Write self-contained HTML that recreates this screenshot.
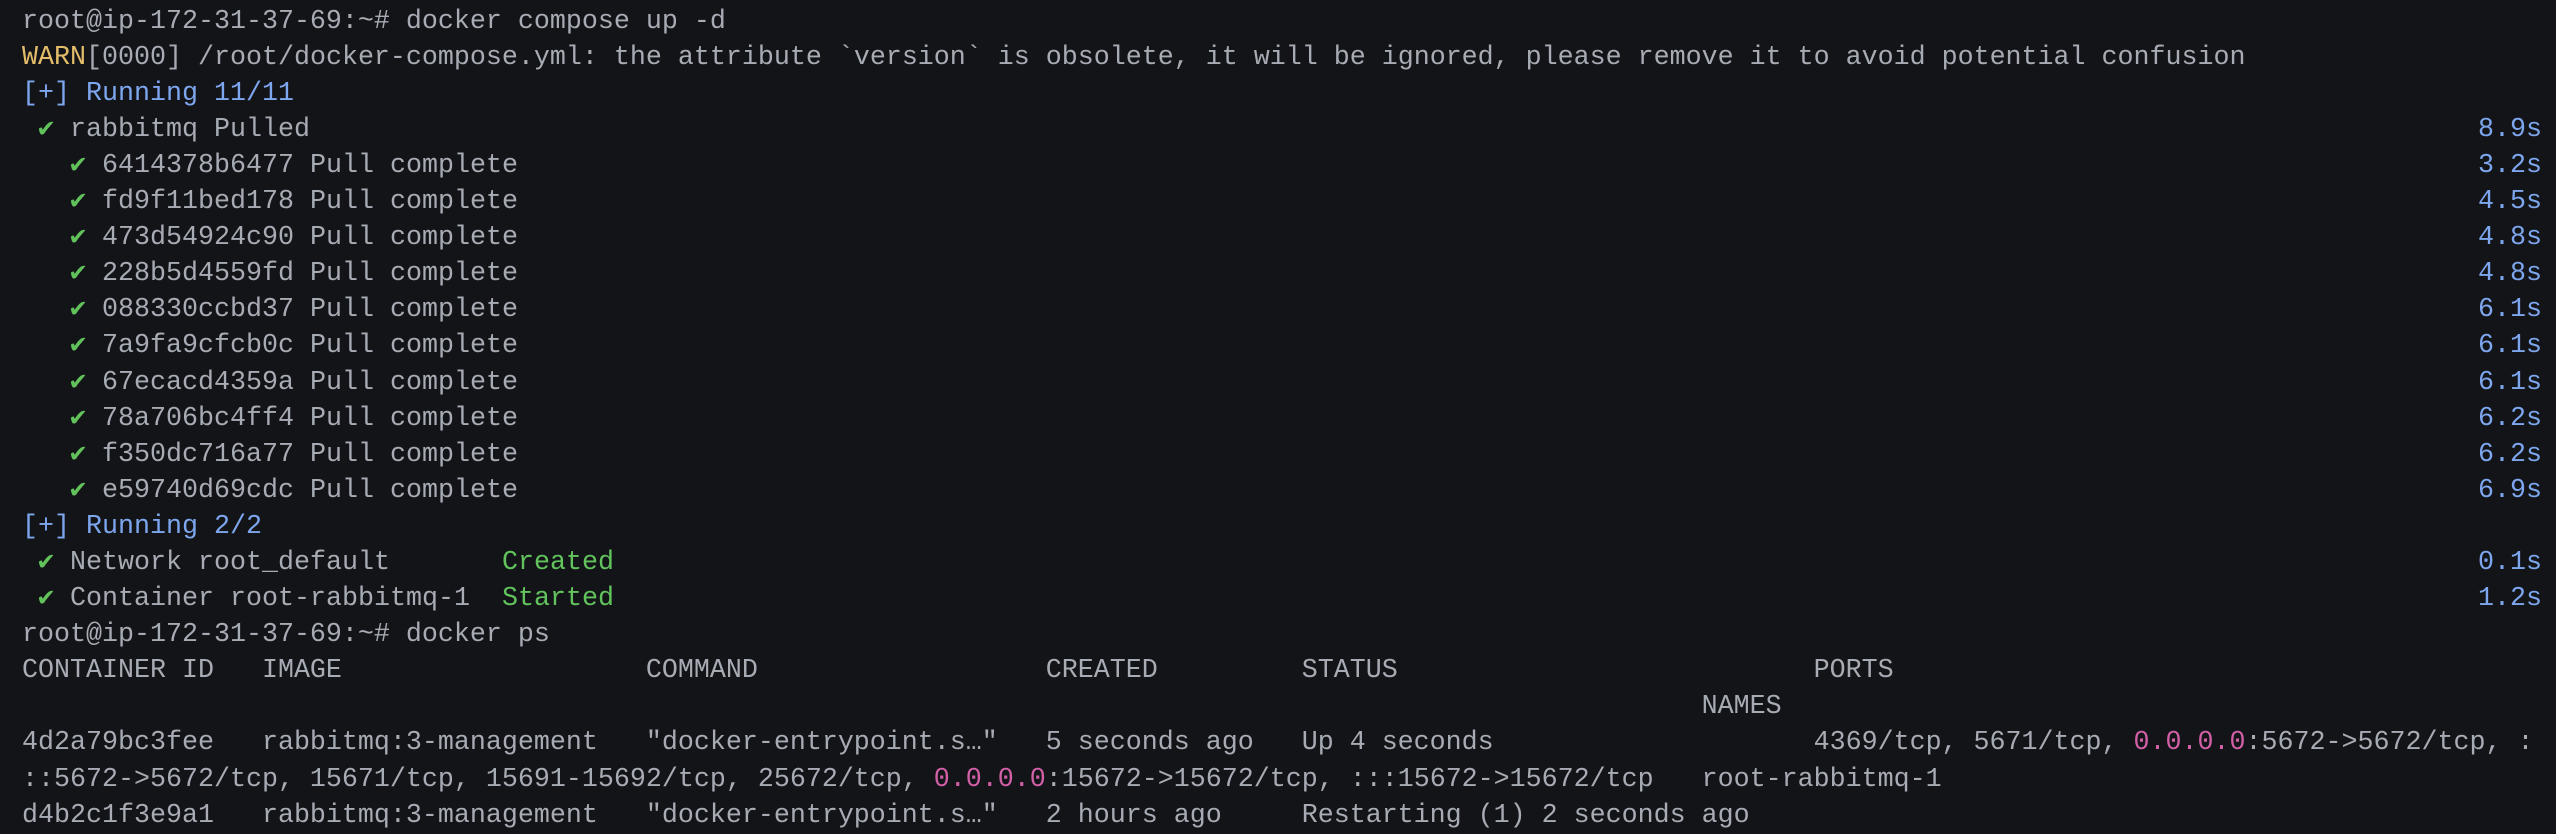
<!DOCTYPE html>
<html><head><meta charset="utf-8"><style>
html,body{margin:0;padding:0;background:#131418;width:2556px;height:806px;overflow:hidden}
#t{position:absolute;left:22px;top:-32.5px;font-family:"Liberation Mono","DejaVu Sans Mono",monospace;font-size:26.67px;color:#a7abb3}
.l{height:36.1px;line-height:36.1px;position:relative;width:2520px;white-space:pre}
.y{color:#e3bd6a}.b{color:#7da6ee}.g{color:#62c35c}.p{color:#d160a6}
.r{position:absolute;right:0;top:0;color:#7da6ee}
</style></head><body><div id="t"><div class="l">root@ip-172-31-37-69:~# ls -la docker-compose.yml</div><div class="l">root@ip-172-31-37-69:~# docker compose up -d</div><div class="l"><span class="y">WARN</span>[0000] /root/docker-compose.yml: the attribute `version` is obsolete, it will be ignored, please remove it to avoid potential confusion</div><div class="l"><span class="b">[+] Running 11/11</span></div><div class="l"> <span class="g">✔</span> rabbitmq Pulled<span class="r">8.9s</span></div><div class="l">   <span class="g">✔</span> 6414378b6477 Pull complete<span class="r">3.2s</span></div><div class="l">   <span class="g">✔</span> fd9f11bed178 Pull complete<span class="r">4.5s</span></div><div class="l">   <span class="g">✔</span> 473d54924c90 Pull complete<span class="r">4.8s</span></div><div class="l">   <span class="g">✔</span> 228b5d4559fd Pull complete<span class="r">4.8s</span></div><div class="l">   <span class="g">✔</span> 088330ccbd37 Pull complete<span class="r">6.1s</span></div><div class="l">   <span class="g">✔</span> 7a9fa9cfcb0c Pull complete<span class="r">6.1s</span></div><div class="l">   <span class="g">✔</span> 67ecacd4359a Pull complete<span class="r">6.1s</span></div><div class="l">   <span class="g">✔</span> 78a706bc4ff4 Pull complete<span class="r">6.2s</span></div><div class="l">   <span class="g">✔</span> f350dc716a77 Pull complete<span class="r">6.2s</span></div><div class="l">   <span class="g">✔</span> e59740d69cdc Pull complete<span class="r">6.9s</span></div><div class="l"><span class="b">[+] Running 2/2</span></div><div class="l"> <span class="g">✔</span> Network root_default       <span class="g">Created</span><span class="r">0.1s</span></div><div class="l"> <span class="g">✔</span> Container root-rabbitmq-1  <span class="g">Started</span><span class="r">1.2s</span></div><div class="l">root@ip-172-31-37-69:~# docker ps</div><div class="l">CONTAINER ID   IMAGE                   COMMAND                  CREATED         STATUS                          PORTS</div><div class="l">                                                                                                         NAMES</div><div class="l">4d2a79bc3fee   rabbitmq:3-management   "docker-entrypoint.s…"   5 seconds ago   Up 4 seconds                    4369/tcp, 5671/tcp, <span class="p">0.0.0.0</span>:5672-&gt;5672/tcp, :</div><div class="l">::5672-&gt;5672/tcp, 15671/tcp, 15691-15692/tcp, 25672/tcp, <span class="p">0.0.0.0</span>:15672-&gt;15672/tcp, :::15672-&gt;15672/tcp   root-rabbitmq-1</div><div class="l">d4b2c1f3e9a1   rabbitmq:3-management   "docker-entrypoint.s…"   2 hours ago     Restarting (1) 2 seconds ago</div></div></body></html>
